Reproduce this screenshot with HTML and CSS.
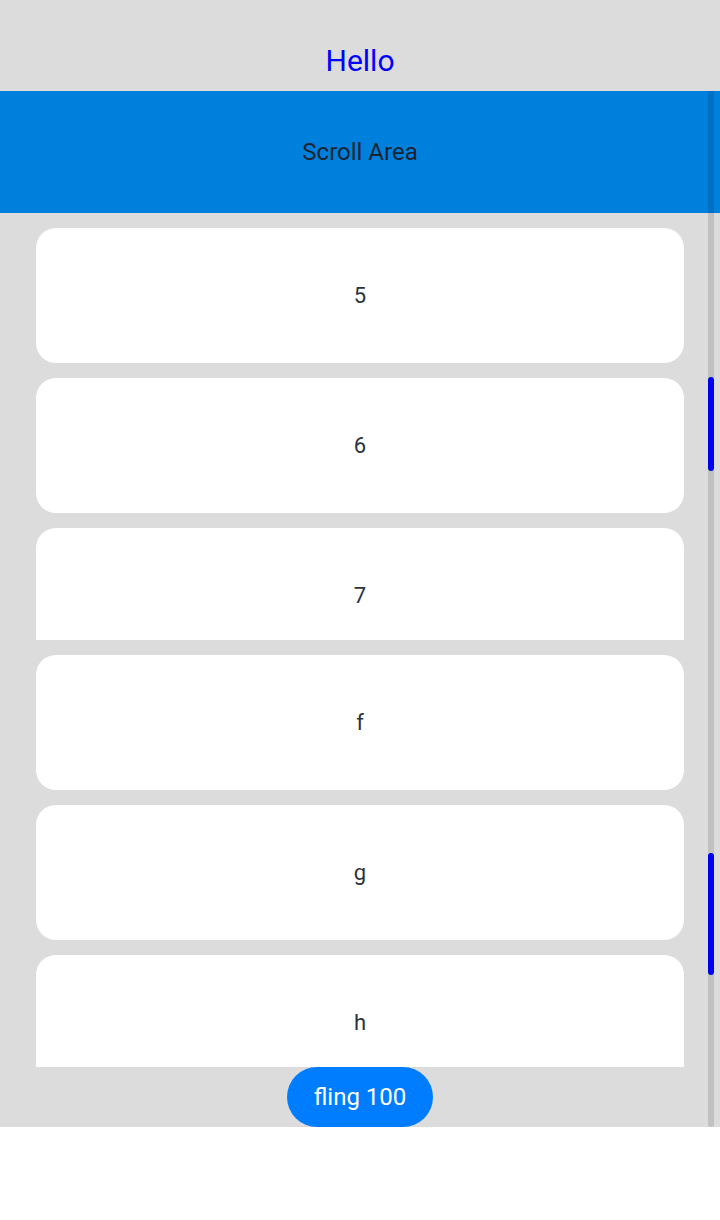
FILE: index.html
```html
<!DOCTYPE html>
<html>
<head>
<meta charset="utf-8">
<link rel="stylesheet" href="styles.css">
</head>
<body>
<div class="app">
  <div class="title">Hello</div>
  <div class="scroller">
    <div class="banner">Scroll Area</div>
    <div class="list">
      <div class="card">5</div>
      <div class="card">6</div>
      <div class="card">7</div>
    </div>
    <div class="list">
      <div class="card">f</div>
      <div class="card">g</div>
      <div class="card">h</div>
    </div>
    <div class="track"></div>
    <div class="thumb thumb-a"></div>
    <div class="thumb thumb-b"></div>
  </div>
  <div class="footer"><button class="fling">fling 100</button></div>
</div>
</body>
</html>
```
FILE: styles.css
```css
html, body {
  margin: 0;
  padding: 0;
  background: #ffffff;
  font-family: Roboto, "Noto Sans", sans-serif;
}
.app {
  width: 720px;
  height: 1127px;
  background: #dcdcdc;
  display: flex;
  flex-direction: column;
}
.title {
  height: 91px;
  display: flex;
  align-items: center;
  justify-content: center;
  padding-top: 30px;
  box-sizing: border-box;
  color: #0000ff;
  font-size: 30px;
}
.scroller {
  position: relative;
  height: 976px;
  display: flex;
  flex-direction: column;
}
.banner {
  height: 122px;
  background: #0080dd;
  color: #182431;
  font-size: 24px;
  display: flex;
  align-items: center;
  justify-content: center;
}
.list {
  height: 427px;
  overflow: hidden;
  padding: 15px 36px 0;
  box-sizing: border-box;
  display: flex;
  flex-direction: column;
  gap: 15px;
}
.card {
  flex: none;
  height: 135px;
  background: #ffffff;
  border-radius: 20px;
  display: flex;
  align-items: center;
  justify-content: center;
  color: #2a3440;
  font-size: 22px;
}
.track {
  position: absolute;
  top: 0;
  bottom: -60px;
  right: 6px;
  width: 6px;
  border-radius: 0 0 3px 3px;
  background: rgba(0, 0, 0, 0.12);
}
.thumb {
  position: absolute;
  right: 6px;
  width: 6px;
  border-radius: 3px;
  background: #0000ee;
}
.thumb-a { top: 286px; height: 94px; }
.thumb-b { top: 762px; height: 122px; }
.footer {
  height: 60px;
  display: flex;
  justify-content: center;
}
.fling {
  width: 146px;
  height: 60px;
  border: none;
  border-radius: 30px;
  background: #007dff;
  color: #ffffff;
  font-family: Roboto, "Noto Sans", sans-serif;
  font-size: 24px;
  font-weight: 400;
  padding: 0;
}
```
